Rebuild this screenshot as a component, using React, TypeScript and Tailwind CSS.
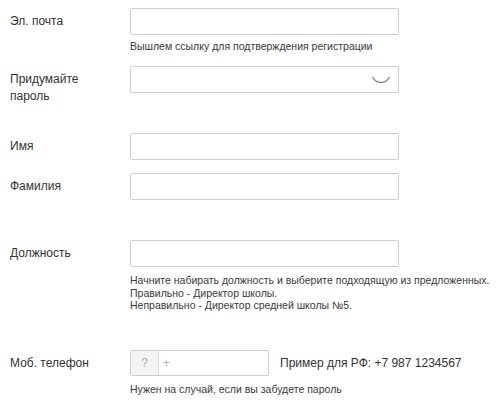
import React from "react";

const font = { fontFamily: '"Liberation Sans", Arial, sans-serif' };

function Field({
    label,
    children,
    className = "",
}: {
    label: React.ReactNode;
    children: React.ReactNode;
    className?: string;
}) {
    return (
        <div className={`flex ${className}`}>
            <div className="w-[120px] shrink-0 pt-[5px] text-[12px] leading-[17px] text-[#333]">
                {label}
            </div>
            <div className="flex flex-col">{children}</div>
        </div>
    );
}

function TextInput({ children }: { children?: React.ReactNode }) {
    return (
        <div className="relative flex h-[27px] w-[269px] items-center rounded-[2px] border border-[#cdcdcd] bg-white">
            {children}
        </div>
    );
}

function Hint({ children, className = "" }: { children: React.ReactNode; className?: string }) {
    return (
        <div className={`whitespace-nowrap text-[10.5px] leading-[13px] text-[#3a3a3a] ${className}`}>
            {children}
        </div>
    );
}

export default function App() {
    return (
        <div
            className="flex h-[409px] w-[500px] flex-col overflow-hidden bg-white pl-[10px]"
            style={font}
        >
            <Field label="Эл. почта" className="mt-[8px]">
                <TextInput />
                <Hint className="mt-[5px]">Вышлем ссылку для подтверждения регистрации</Hint>
            </Field>

            <Field label={<>Придумайте<br />пароль</>} className="mt-[13px]">
                <TextInput>
                    <svg
                        className="absolute right-[7px] top-[4px]"
                        width="20"
                        height="14"
                        viewBox="0 0 20 14"
                        fill="none"
                    >
                        <path
                            d="M1.8 6.3 A9.1 9.1 0 0 0 18.2 6.3"
                            stroke="#8a8a8a"
                            strokeWidth="1.4"
                            strokeLinecap="round"
                        />
                    </svg>
                </TextInput>
            </Field>

            <Field label="Имя" className="mt-[28px]">
                <TextInput />
            </Field>

            <Field label="Фамилия" className="mt-[13px]">
                <TextInput />
            </Field>

            <Field label="Должность" className="mt-[40px]">
                <TextInput />
                <div className="mt-[7px] whitespace-nowrap text-[10.5px] leading-[12.5px] text-[#3a3a3a]">
                    <div>Начните набирать должность и выберите подходящую из предложенных.</div>
                    <div>Правильно - Директор школы.</div>
                    <div>Неправильно - Директор средней школы №5.</div>
                </div>
            </Field>

            <Field label="Моб. телефон" className="mt-[38px]">
                <div className="flex items-center">
                    <div className="flex h-[26px] w-[139px] overflow-hidden rounded-[2px] border border-[#cdcdcd] bg-white">
                        <div className="flex w-[28px] items-center justify-center border-r border-[#dedede] bg-[#f4f4f4] text-[12px] text-[#aaa]">
                            ?
                        </div>
                        <div className="flex items-center pl-[4px] text-[12px] text-[#b5b5b5]">+</div>
                    </div>
                    <div className="ml-[11px] whitespace-nowrap text-[12px] text-[#333]">
                        Пример для РФ: +7 987 1234567
                    </div>
                </div>
                <Hint className="mt-[7px]">Нужен на случай, если вы забудете пароль</Hint>
            </Field>
        </div>
    );
}
